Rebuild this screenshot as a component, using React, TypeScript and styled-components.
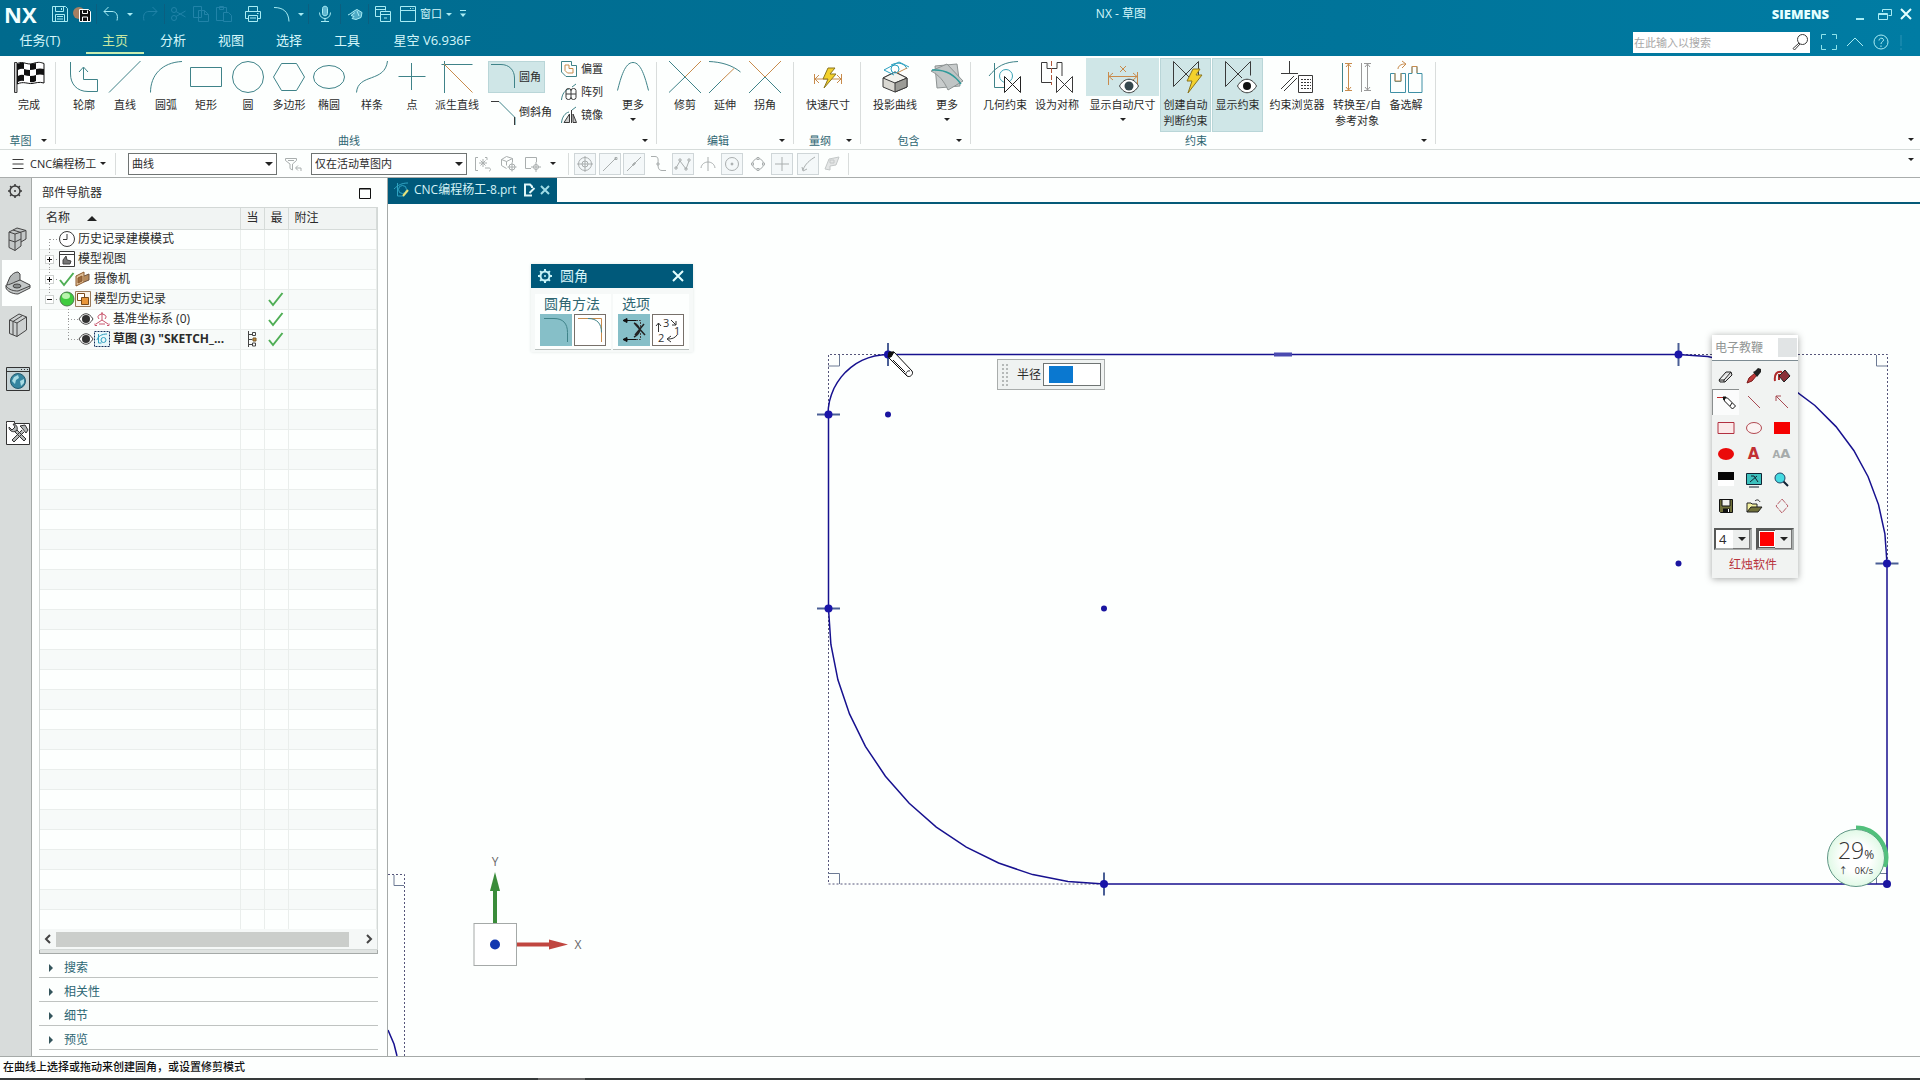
import React from 'react';
import styled, { createGlobalStyle, css } from 'styled-components';

const FONT = '"Open Sans", "Noto Sans CJK SC", sans-serif';
const TEAL = '#3f8389';
const AMBER = '#c88b4c';
const INK = '#3a3a3a';
const GREY = '#a9aeae';
const PALE = '#a8ecf4';
const DIM = '#2183a8';
const NAVY = '#17118f';

const GlobalStyle = createGlobalStyle`
  * { box-sizing: border-box; }
  body { margin: 0; overflow: hidden; background: #fdfffe; color: #2b2b2b; font: 11px/16px ${FONT}; }
  button, input, select { font: inherit; color: inherit; }
  svg { display: block; flex: none; }
`;

const plainButton = css`
  border: 0;
  margin: 0;
  padding: 0;
  background: none;
  cursor: default;
`;

/* ---------- drawings ---------- */

const gearPath = (c: number, from: number, to: number) =>
  Array.from({ length: 8 }, (_, i) => {
    const a = (i * Math.PI) / 4;
    const x = Math.cos(a);
    const y = Math.sin(a);
    return `M${(c + x * from).toFixed(1)} ${(c + y * from).toFixed(1)}L${(c + x * to).toFixed(1)} ${(c + y * to).toFixed(1)}`;
  }).join('');

const art: Record<string, React.ReactNode> = {
  flag: (
    <>
      <path d="M1.500 1.500H4V31.500H1.500Z" fill="#ccc" stroke={INK} />
      <path d="M4.500 2.500C10 -.5 14 4.500 20 2.500S28 1.500 31 2.500V22C26 20.500 23 22 19 22.500S10 20 4.500 23Z" fill="#fff" stroke="#111" />
      <path d="M5 3q3-2 6-1v6q-3-1-6 1zM17 3q4 0 6-1v6q-3 1-6 1zM11 8q3 1 6 1v6q-3 0-6-1zM23 8q4-1 8 0v6q-4-1-8 0zM5 15q3-2 6-1v6q-3-1-6 1zM17 15q4 0 6-1v6q-3 2-6 1z" fill="#111" />
    </>
  ),
  profile: <path d="M2.500 1V13C2.500 23 9 30.500 20 30.500H29.500V18.500H15.500V6.500M11 11l4.500-5 4.500 5" stroke={TEAL} />,
  line: <path d="M0 31.500L31.500 0" stroke={TEAL} />,
  arc: <path d="M.5 31.500C.5 14 12 1.500 32 .5" stroke={TEAL} />,
  rect: <path d="M.5 6.500h31v19h-31z" stroke={TEAL} />,
  circle: <circle cx="16" cy="16" r="15.500" stroke={TEAL} />,
  hexagon: <path d="M8.500 2.500h15l8 13.500-8 13.500h-15L.5 16z" stroke={TEAL} />,
  ellipse: <ellipse cx="16" cy="16" rx="15.500" ry="11.500" stroke={TEAL} />,
  spline: <path d="M.5 31.500C2 12 29 22 31.500 0" stroke={TEAL} />,
  plus: <path d="M2.500 15.500h27M15.500 2v27" stroke={TEAL} />,
  derive: (
    <>
      <path d="M.5 3.500h31M3.500 0v32" stroke={TEAL} />
      <path d="M3 3l28.500 28.500" stroke={AMBER} />
    </>
  ),
  fillet: <path d="M0 3.500H10C18 3.500 23.500 9 23.500 17V27" stroke={TEAL} />,
  chamfer: (
    <>
      <path d="M0 3.500h8l16 16V27" stroke={TEAL} />
      <path d="M0 3.500h8M23.500 19v8" stroke={INK} />
    </>
  ),
  offset: (
    <>
      <path d="M.5.500h10v4h5v11H5L.5 11z" stroke={TEAL} />
      <path d="M4 4h4v3.500h4V12H6.500L4 9.500z" stroke={AMBER} />
    </>
  ),
  pattern: (
    <>
      <path d="M.5 16C1 10 4 6 8 5M11 3l4-3" stroke={TEAL} />
      <path d="M5 6.500a2.500 2 0 1 1 5 0a2.500 2 0 1 1 5 0v7a2.500 2 0 1 1-5 0a2.500 2 0 1 1-5 0zM5 10h10M10 6v8" stroke={INK} />
    </>
  ),
  mirror: (
    <>
      <path d="M.5 16C1 10 4 6 8 5M11 3l4-3" stroke={TEAL} />
      <path d="M3 15.500L8.500 7v8.500zM10.500 3v13M12 7l3.500 8.500H12zM10.500 4v12" fill="#ccc" stroke={INK} />
    </>
  ),
  parabola: <path d="M.5 29.500C4 16 8 1.500 16 1.500S28 16 31.500 29.500" stroke={TEAL} />,
  trim: (
    <>
      <path d="M16 16L32 0" stroke={AMBER} />
      <path d="M0 0l32 32M0 31.500L16 16" stroke={TEAL} />
    </>
  ),
  extend: (
    <>
      <path d="M0 .5C12 1 23 4 31.500 11" stroke={TEAL} />
      <path d="M12 20L25 7.500" stroke={AMBER} />
      <path d="M0 32L12 20" stroke={TEAL} />
    </>
  ),
  corner: (
    <>
      <path d="M0 0l16 16L32 0" stroke={AMBER} />
      <path d="M0 32l16-16 16 16" stroke={TEAL} />
    </>
  ),
  rapid: (
    <>
      <path d="M2.500 13v10M29.500 13v10M3 18h26M7 14l-4 4 4 4M25 14l4 4-4 4" stroke={AMBER} />
      <path d="M16 7l-5 11h5l-4 9 12-14h-6l5-6z" fill="#f3d12c" stroke="#8a7520" />
    </>
  ),
  project: (
    <>
      <path d="M4 17l12-6 12 6v9l-12 5-12-5z" fill="#d9d8d2" stroke={INK} />
      <path d="M4 17l12 5 12-5-12-6z" fill="#f3f3ee" stroke={INK} />
      <path d="M16 22v9l12-5v-9z" fill="#9b9b96" stroke={INK} />
      <path d="M5 9L20 1l10 5M5 9l10 5M12 4c8-4 14-1 16 4" stroke="#2aa0c0" />
      <circle cx="16" cy="8" r="4" stroke="#2aa0c0" />
      <path d="M18 12l10-5" stroke={AMBER} />
    </>
  ),
  surfaces: (
    <>
      <path d="M4 5l22-2 3 22-23 2z" fill="#c8cccc" stroke="#8d9393" />
      <path d="M0 10L16 3l16 17-15 9C13 20 8 14 0 10z" fill="#bfc4c4" fillOpacity=".9" stroke="#8d9393" />
      <path d="M1 9c13-1 22 4 29 14" stroke="#2f9a9a" strokeWidth="1.500" />
    </>
  ),
  geo: (
    <>
      <path d="M5.500 2v24.500h11M0 15C8 5 16 1 29 .5" stroke={TEAL} />
      <circle cx="17" cy="15" r="6.500" stroke="#3aa3b5" />
      <path d="M15.500 15.500v16l16-16v16z" fill="#fff" stroke="#222" />
    </>
  ),
  symm: (
    <>
      <path d="M11 21.500H.5V1.500H6V7.500h10V1.500h5V15" stroke={INK} />
      <path d="M10.500 0v24" stroke="#b0563a" strokeDasharray="5 2" />
      <path d="M15.500 15.500v16l16-16v16z" fill="#fff" stroke={INK} />
    </>
  ),
  autodim: (
    <>
      <path d="M1.500 11v13M30.500 11v13M2 15.500h28M6 12l-4 3.500L6 19M26 12l4 3.500-4 3.500M13 5l6 6M19 5l-6 6" stroke={AMBER} />
      <path d="M12.500 25c5-9 14-9 19 0-5 9-14 9-19 0z" fill="#fff" stroke={INK} />
      <circle cx="22" cy="25" r="4.500" fill="#35474d" />
    </>
  ),
  autoinfer: (
    <>
      <path d="M3.500.500v25l25-25v14M3.500.500L20 17" stroke={INK} />
      <path d="M23 8l-6 12h5l-4 12 14-18h-6l4-6z" fill="#f3d12c" stroke="#8a7520" />
    </>
  ),
  showcon: (
    <>
      <path d="M3.500.500v25l25-25v14M3.500.500L20 17" stroke={INK} />
      <path d="M15.500 25c5-9 14-9 19 0-5 9-14 9-19 0z" fill="#fff" stroke={INK} />
      <circle cx="25" cy="25" r="4" fill="#111" />
    </>
  ),
  browser: (
    <>
      <path d="M8.500 0v12M0 12.500h17M0 28l13-13M3 30l13-13" stroke={INK} />
      <path d="M17.500 14.500h14v17h-14z" fill="#fff" stroke={INK} />
      <path d="M20 18.500h10M20 21.500h10M20 24.500h10M20 27.500h10" stroke={INK} strokeDasharray="2 1" />
    </>
  ),
  convert: (
    <>
      <path d="M4 2.500h7M4 29.500h7M7.500 3v26M5 6l2.500-3L10 6M5 26l2.500 3 2.500-3" stroke={AMBER} />
      <path d="M1.500 2v29" stroke={TEAL} />
      <path d="M20.500 2v29M23 2.500h7M23 29.500h7M26.500 3v26M24 6l2.500-3L29 6M24 26l2.500 3 2.500-3" stroke="#999" />
    </>
  ),
  alt: (
    <>
      <path d="M.5 12.500H5v8h6v-8h4.500v19H.5zM18.500 12.500H22v-7h5v7h5v19H18.500z" stroke="#3f90a5" />
      <path d="M5 12v8h6v-8M8 8c0-3 3-5 7-5M12 0l4 3-4 4M22 12V5.500h5V12" stroke={AMBER} />
    </>
  ),
  save: <path d="M.5.500h13l2 2v13H.5zM3.500.500v5h8v-5M3.500 15.500v-7h9v7M5 10.500h6M5 13h6M9.500 2v2" stroke={PALE} />,
  saveas: (
    <>
      <circle cx="4" cy="7" r="6" fill="#a57f62" />
      <path d="M4.500 3.500h9l2 2v10h-11z" fill="#111" stroke="#fff" />
      <path d="M7.500 4.500v3h5v-3M7.500 15v-4h5v4" stroke="#fff" />
    </>
  ),
  undo: <path d="M5.500 1L1 5.500 5.500 10M1 5.500h8c4 0 6.500 3 5 9" stroke={PALE} />,
  redo: <path d="M10.500 1L15 5.500 10.500 10M15 5.500H7c-4 0-6.500 3-5 9" stroke={DIM} />,
  cut: (
    <g stroke={DIM}>
      <circle cx="4" cy="4" r="2.500" />
      <circle cx="4" cy="12" r="2.500" />
      <path d="M6 5.500L15.500 11M6 10.500L15.500 5" />
    </g>
  ),
  copy: <path d="M.5.500h8v11h-8zM5.500 4.500h6l4 4v7h-10zM11.500 4.500v4h4" stroke={DIM} />,
  paste: <path d="M7.500 14.500h-7v-13h10v5M3.500.500h4v3h-4zM7.500 6.500h5l3 3v6h-8z" stroke={DIM} />,
  print: <path d="M3.500 5V.5h9V5M3.500 12.500h-3v-7h15v7h-3M3.500 9.500h9v6h-9zM5 12h6M12 7.500h1.500" stroke={PALE} />,
  curve: <path d="M0 1.500c9 0 14.500 4 15 14" stroke={PALE} />,
  mic: (
    <g stroke={PALE}>
      <path d="M5.500 2.500c0-3 5-3 5 0v5c0 3-5 3-5 0z" fill="#5fb6cf" />
      <path d="M2.500 6.500c0 8 11 8 11 0M8 12v3.500M4 15.500h8" />
    </g>
  ),
  hand: <path d="M1 9c3-1 5-4 9-5.500l5 3-1 5-5 2-4-1 2-2-3-1 4-3M10 5l2 5" stroke={PALE} fill="#4da9c4" />,
  windows: <path d="M.5.500h10v4M.5.500v10h5M.5 3.500h10M5.500 5.500h10v10h-10zM5.500 8.500h10M9 12h3" stroke={PALE} />,
  window: <path d="M.5.500h15v15H.5zM.5 4.500h15M10 2.500h1M12.500 2.500h1" stroke={PALE} />,
  minimize: <path d="M4 13h8" stroke={PALE} strokeWidth="2" />,
  restore: <path d="M6.500 6V3.500h9v6h-3M2.500 7.500h9v6h-9zM2.500 8.500h9" stroke={PALE} />,
  close: <path d="M3 3l10 10M13 3L3 13" stroke="#e4ffff" strokeWidth="2" />,
  expand: <path d="M.5 5V.5H5M11 .5h4.500V5M15.500 11v4.500H11M5 15.500H.5V11" stroke="#8fe3ea" />,
  chevron: <path d="M0 12l8-8 8 8" stroke={PALE} />,
  help: (
    <>
      <circle cx="8" cy="8" r="7" stroke={PALE} />
      <path d="M6 6.500c0-3 4.500-3 4.500-.5 0 2-2.500 1.500-2.500 4M8 11.500v1.500" stroke={PALE} />
    </>
  ),
  more: <path d="M8 1v11M8 14v2" stroke="#2a93b5" />,
  lens: (
    <>
      <circle cx="10.500" cy="5.500" r="5" stroke={INK} />
      <path d="M7 9l-6 5.500 1.500 1.500L8 10" stroke={INK} />
    </>
  ),
  menu: <path d="M2.500 3.500h11M2.500 8h11M2.500 12.500h11" stroke={INK} />,
  funnel: <path d="M.5 2.500h11v2L7.500 8v6L5 12.500V8L.5 4.500zM3 4.500h6M16 15v-3h-5M13 9.500l-2.500 2.500 2.500 2.500" stroke={GREY} />,
  selA: <path d="M3 1.500H.5v13H3M10 1.500h2V4M8 3v8M4 7h8M5.500 4.500l5 5M10.500 4.500l-5 5M10 12h4c2 0 2 3 0 3" stroke={GREY} />,
  selB: (
    <g stroke={GREY}>
      <path d="M.5 3.500l5-3 6 2v4M.5 3.500v6l5 3M.5 3.500l5 2 6-3M5.500 5.500v4" />
      <circle cx="11" cy="11" r="3" />
      <path d="M11 6.500v9M6.500 11h9" />
    </g>
  ),
  selC: (
    <g stroke={GREY}>
      <path d="M6 12.500H.5v-11h11V6" />
      <circle cx="11" cy="11" r="2.500" />
      <path d="M11 6v10M6 11h10" />
    </g>
  ),
  snap0: (
    <g stroke={GREY}>
      <circle cx="8" cy="8" r="6.500" />
      <circle cx="8" cy="8" r="3" />
      <path d="M8 0v16M0 8h16" />
    </g>
  ),
  snap1: <path d="M1 15L14 2M13 1.500h2v2h-2z" stroke={GREY} />,
  snap2: <path d="M1 15L15 1M6.500 8.500l2-2 1 1-2 2z" stroke={GREY} />,
  snap3: <path d="M0 .5h4c4 0 3 4 3 7s0 7 4 7h4M6 7h2v2H6z" stroke={GREY} />,
  snap4: <path d="M1 12L5 5l6 8 3-8M4 3h2v2H4zM10 12h2v2h-2zM0 11h2v2H0zM13 3h2v2h-2z" stroke={GREY} />,
  snap5: <path d="M8 1v14M1 12c1-8 13-8 14 0" stroke={GREY} />,
  snap6: (
    <g stroke={GREY}>
      <circle cx="8" cy="8" r="6.500" />
      <circle cx="8" cy="8" r="1" fill={GREY} />
    </g>
  ),
  snap7: (
    <g stroke={GREY}>
      <circle cx="8" cy="8" r="5.500" />
      <path d="M7 1.500h2v2H7zM7 12.500h2v2H7zM1.500 7h2v2h-2zM12.500 7h2v2h-2z" fill="#fff" />
    </g>
  ),
  snap8: <path d="M8 1v14M1 8h14" stroke={GREY} />,
  snap9: <path d="M15 1C10 4 5 8 3 14M2 11l1 4 4-2" stroke={GREY} />,
  snap10: <path d="M1 13L5 3l10-2-3 8-6 1v4zM6 4h4v3H6z" stroke="#c4c8c8" fill="#e4e6e6" />,
  gear: (
    <g stroke={INK}>
      <circle cx="8" cy="8" r="5" strokeWidth="1.500" />
      <circle cx="8" cy="8" r="1" fill={INK} stroke="none" />
      <path d={gearPath(8, 5, 7)} strokeWidth="1.500" />
    </g>
  ),
  gearLight: (
    <g stroke="#c8f4f8">
      <circle cx="8" cy="8" r="4.500" strokeWidth="2" />
      <circle cx="8" cy="8" r="1" fill="#c8f4f8" stroke="none" />
      <path d={gearPath(8, 5, 7)} strokeWidth="2" />
    </g>
  ),
  blocks: (
    <g stroke="#444" strokeLinejoin="round">
      <path d="M3 5l8-4 9 2.500V12l-5 3v4l-6 4.500-6-3z" fill="#c3c7c7" />
      <path d="M3 5l6 2v16.500M9 7l11-3.500M3 13l6 2 6-3M15 5.500V15M7 3l8 2.500" />
    </g>
  ),
  partnav: (
    <g stroke="#444" strokeLinejoin="round">
      <path d="M1 13L4 6C6 3 9 1 12 1l2 2v9C10 12 6 14 4 18z" fill="#b3b7b7" />
      <path d="M0 14c3 0 7-2 9-3l5-2 10 5v3l-12 6C6 23 1 20 0 17z" fill="#c4c8c8" />
      <path d="M0 15c3 4 8 5 12 5l12-5" />
      <ellipse cx="11" cy="15" rx="4" ry="2" fill="#8a8e8e" />
    </g>
  ),
  books: (
    <g stroke="#444" strokeLinejoin="round">
      <path d="M3.500 7L13 1l7.500 3v13L11 23.500l-7.500-3z" fill="#cdd1d1" />
      <path d="M3.500 7l7.500 3 9.500-6M11 10v13.500M7 8.500v13.500M7 8.500l9.500-6" />
    </g>
  ),
  globe: (
    <>
      <path d="M.5.500h23v23H.5zM.5 4.500h23" fill="#c7d3d6" stroke="#333" />
      <path d="M15 2.500h7" stroke="#333" strokeDasharray="1 2" />
      <circle cx="12" cy="14" r="7.500" fill="#3585a0" stroke="#245c70" />
      <path d="M8 10l4-2 1 3-3 2-1 4-3-3zM14 14l4-2 0 4-3 3z" fill="#a8dbe4" />
    </>
  ),
  tools: (
    <>
      <path d="M.5 2.500V.5h8v2h15v21H.5z" fill="#fff" stroke="#333" />
      <path d="M8 10l10 10 2-2L10 8M16 9L6 19l2 2L18 11" stroke="#333" fill="#b0b4b4" />
      <path d="M3 6l3 3 3-3-2-3c3 0 5 3 4 6-2 3-8 2-8-3zM14 5l5-1 3 5-2 3-4-5z" stroke="#333" fill="#b0b4b4" />
    </>
  ),
  clock: (
    <g stroke={INK}>
      <circle cx="8" cy="8" r="7.500" fill="#fff" />
      <path d="M8 3v5.500H4" />
    </g>
  ),
  modelview: (
    <>
      <path d="M.5.500h15v15H.5zM.5 3.500h15" stroke={INK} fill="#fff" />
      <path d="M4 9l3-4 1 4 4 1-1 3H4z" fill="#777" stroke="#444" />
    </>
  ),
  check: <path d="M1 9l4 5L14.500 2" stroke="#4fae55" strokeWidth="2" />,
  camera: (
    <>
      <path d="M1 5l8-4v10l-8 4z" fill="#e0bf98" stroke="#8c5a2c" />
      <path d="M3 7l4-2v5l-4 2z" fill="#9a6a40" stroke="#8c5a2c" />
      <path d="M9 5l5-2v6l-5 2" fill="#b58a5c" stroke="#6d5240" />
    </>
  ),
  ball: (
    <>
      <circle cx="8" cy="8" r="7" fill="#3ecb3e" stroke="#4c7a4c" />
      <ellipse cx="7" cy="5" rx="4" ry="3" fill="#b9f5ae" />
    </>
  ),
  history: (
    <>
      <path d="M.5.500h15v15H.5z" stroke="#9a7a5a" fill="#faf3e8" />
      <path d="M2.500 2.500h7v7h-7z" fill="#fff" stroke="#7a4a1a" />
      <path d="M6.500 6.500h7v7h-7z" fill="#e8963a" stroke="#7a4a1a" />
    </>
  ),
  eye: (
    <>
      <path d="M1 8c4-7 10-7 14 0-4 7-10 7-14 0z" fill="#fff" stroke="#444" />
      <circle cx="8" cy="8" r="4" fill="#333" />
    </>
  ),
  csys: <path d="M8 2v7l-6 4M8 9l6 4M8 1v2M1 12.500v2h2M15 12.500v2h-2M5 8a4 3 0 1 1 6 0M5 13h6" stroke="#c8546c" />,
  sketch: (
    <>
      <path d="M.5.500h15v15H.5z" stroke="#14305c" strokeDasharray="2 1" fill="#e9f8fb" />
      <path d="M4.500 3v9h3M3 9c1-4 5-6 10-6" stroke="#2e9fbf" />
      <circle cx="9.500" cy="9" r="2.500" stroke="#2e9fbf" />
    </>
  ),
  nodes: (
    <>
      <path d="M1.500 0v16M1.500 3.500h4M1.500 8.500h4M1.500 13.500h4M5.500 1.500h3v3h-3zM5.500 12h3v3h-3z" stroke="#444" />
      <path d="M6 7h3v3H6z" fill="#c08a3a" stroke="#7a5a2a" />
    </>
  ),
  maximize: <path d="M2.500 3.500h11v10h-11zM2.500 4h11" stroke="#111" />,
  left: <path d="M10 4L6 8l4 4" stroke="#444" strokeWidth="2" />,
  right: <path d="M6 4l4 4-4 4" stroke="#444" strokeWidth="2" />,
  tabSketch: (
    <>
      <path d="M3.500 1v13h6M0 7C4 3 8 1 14 1" stroke="#2fa3c2" />
      <circle cx="8.500" cy="7.500" r="4" stroke="#2fa3c2" />
      <path d="M14 8l-5 6" stroke="#e8e27a" strokeWidth="2" />
    </>
  ),
  tabDoc: (
    <>
      <path d="M11 13.500H4v-11h5l2 2V6" stroke="#dff6f8" strokeWidth="2" />
      <path d="M13.500 6l-5 5" stroke="#dff6f8" strokeWidth="2" />
    </>
  ),
  tabX: <path d="M4 4l8 8M12 4l-8 8" stroke="#9fdce6" strokeWidth="2" />,
  dlgFillet: <path d="M4 4.500h10c9 0 13.500 5 13.500 14V28" stroke={TEAL} />,
  dlgFillet2: (
    <>
      <path d="M4 4.500h23.500V28" stroke={AMBER} />
      <path d="M14 4.500c9 0 13.500 5 13.500 14" stroke={TEAL} />
    </>
  ),
  dlgDelete: (
    <>
      <path d="M5 6.500h13M5 25.500h13" stroke="#111" />
      <path d="M5 6.500l4-2v4zM5 25.500l4-2v4z" fill="#111" stroke="#111" />
      <path d="M18 6.500h4.500V14M22.500 19v6.500H18" stroke="#444" strokeDasharray="2 1" />
      <path d="M16 9c4 2 5 4 6 7-1 3-2 5-6 7M17 10l10 11M26 10l-9 11" stroke="#222" strokeWidth="1.500" />
    </>
  ),
  eraser: <path d="M1 12l7-8h5l1 3-7 7H2zM1 12h5l7-8M6 12v2" stroke="#222" fill="#e0e0e0" />,
  dropper: (
    <>
      <path d="M1 15l2-5 6-5 2 2-5 6z" fill="#c23b3b" stroke="#7a1a1a" />
      <path d="M7 4l2-1 3-3 3 1 0 3-4 5z" fill="#222" />
    </>
  ),
  bucket: (
    <>
      <path d="M1 13C0 6 3 3 8 4M5 12V6" stroke="#b02a2a" strokeWidth="2" />
      <path d="M5 8l6-6 5 6-6 6z" fill="#8a3038" stroke="#222" />
    </>
  ),
  pen: (
    <>
      <path d="M-1 3.500h6" stroke="#c02a2a" />
      <path d="M5.500 3.500l4 .5 8 8-3 3-8-8z" fill="#fff" stroke="#111" />
      <path d="M5 3h3L6 6zM12 12l2-3" fill="#111" stroke="#111" />
    </>
  ),
  pLine: <path d="M2 2l12 12" stroke="#a84a52" />,
  pArrow: <path d="M14 14L2 2M2 7V2h5" stroke="#a84a52" />,
  pRect: <path d="M0 2.500h16v11H0z" stroke="#b23040" fill="#fbe9e9" />,
  pOval: <ellipse cx="8" cy="8" rx="7.500" ry="5.500" stroke="#b24a52" fill="#fbf3f3" />,
  pRectF: <path d="M0 2h16v12H0z" fill="#f50000" />,
  pOvalF: <ellipse cx="8" cy="8" rx="8" ry="6" fill="#ea0a0a" />,
  boards: (
    <>
      <path d="M0 0h16v8H0z" fill="#050505" />
      <path d="M0 8h16v6H0z" fill="#fff" />
    </>
  ),
  monitor: (
    <>
      <path d="M.5 1.500h15v11H.5z" fill="#3cc0bd" stroke="#123" />
      <path d="M4 10l7-6M5 4h3l4 6M3 15h10" stroke="#123" />
    </>
  ),
  zoomIn: (
    <>
      <path d="M9 9l5 5" stroke="#123" strokeWidth="2" />
      <circle cx="6" cy="6" r="5" fill="#45dbe2" stroke="#246" />
    </>
  ),
  floppy: (
    <>
      <path d="M1.500 1.500h13v13h-12l-1-1z" fill="#70703a" stroke="#111" />
      <path d="M4 1.500h8V8H4z" fill="#f2f2ee" stroke="#111" />
      <path d="M5 10.500h7v4H5z" fill="#111" />
      <path d="M10 11h1v3h-1z" fill="#fff" />
    </>
  ),
  folder: (
    <>
      <path d="M1 14V5h4l1 1h5v3" fill="#f2f0a0" stroke="#222" />
      <path d="M1 14l4-5h11l-4 5z" fill="#70703a" stroke="#222" />
      <path d="M9 3c2-2 4-1 5 1" stroke="#222" />
    </>
  ),
  diamond: <path d="M8 1l6 7-6 7-6-7z" stroke="#b8606a" strokeDasharray="5 1" />,
};

function Icon({ name, size = 16, w, h }: { name: string; size?: number; w?: number; h?: number }) {
  return (
    <svg width={w ?? size} height={h ?? size} viewBox={`0 0 ${w ?? size} ${h ?? size}`} fill="none" overflow="visible" aria-hidden="true">
      {art[name]}
    </svg>
  );
}

const Caret = styled.i<{ $color?: string }>`
  display: inline-block;
  flex: none;
  border: 3px solid transparent;
  border-top-color: ${(p) => p.$color ?? '#222'};
  border-bottom-width: 0;
`;

/* ---------- frame ---------- */

const Shell = styled.div`
  display: flex;
  flex-direction: column;
  height: 100vh;
`;

const Banner = styled.header`
  background: linear-gradient(90deg, #006a8d, #00749a 70%, #007ca3);
  color: #d5f7fb;
`;

const BannerRow = styled.div<{ $left: number; $right: number }>`
  display: flex;
  align-items: center;
  height: 28px;
  padding: 0 ${(p) => p.$right}px 0 ${(p) => p.$left}px;
`;

const Brand = styled.strong`
  width: 46px;
  font: 700 22px/28px ${FONT};
  color: #f2ffff;
`;

const ToolButton = styled.button<{ $w: number; $edge?: boolean }>`
  ${plainButton}
  display: flex;
  align-items: center;
  justify-content: center;
  gap: 4px;
  width: ${(p) => p.$w}px;
  height: 20px;
  border-left: ${(p) => (p.$edge ? '1px solid #0b5f80' : '0')};
`;

const AppTitle = styled.h1`
  flex: 1;
  margin: 0;
  text-align: center;
  font: 400 12px/20px ${FONT};
`;

const Maker = styled.span`
  margin-right: 19px;
  font: 800 13px/20px ${FONT};
  color: #e4ffff;
`;

const Tab = styled.button<{ $w: number; $on?: boolean }>`
  ${plainButton}
  width: ${(p) => p.$w}px;
  height: 28px;
  padding-bottom: 4px;
  font-size: 13px;
  line-height: 20px;
  color: ${(p) => (p.$on ? '#c6e6a2' : '#d5f7fb')};
  background: ${(p) => (p.$on ? 'linear-gradient(#c9ecb0, #c9ecb0) 0 24px / 100% 2px no-repeat' : 'none')};
`;

const Search = styled.label`
  display: flex;
  align-items: center;
  width: 177px;
  height: 21px;
  margin: 0 6px 0 auto;
  padding-right: 2px;
  background: #fff;
  input {
    flex: 1;
    min-width: 0;
    height: 20px;
    padding: 0 1px;
    border: 0;
    outline: 0;
    background: none;
  }
  input::placeholder { color: #a8a8a8; }
`;

/* ---------- ribbon ---------- */

const Ribbon = styled.div`
  display: flex;
  align-items: stretch;
  height: 94px;
  border-bottom: 1px solid #d6dcda;
`;

const Group = styled.section<{ $w: number; $pad: number }>`
  display: flex;
  flex-direction: column;
  position: relative;
  flex: 0 0 ${(p) => p.$w}px;
  padding-top: 2px;
  > div { padding-left: ${(p) => p.$pad}px; }
  &::after {
    content: '';
    position: absolute;
    right: 0;
    top: 6px;
    bottom: 5px;
    border-right: 1px solid #d9dddc;
  }
`;

const GroupBody = styled.div`
  display: flex;
  height: 74px;
`;

const GroupFoot = styled.footer`
  display: flex;
  align-items: center;
  height: 17px;
  padding-right: 9px;
  text-align: center;
  color: #2f6672;
  span { flex: 1; }
`;

const BigButton = styled.button<{ $w: number; $on?: boolean; $half?: boolean; $gap?: number }>`
  ${plainButton}
  display: flex;
  flex-direction: column;
  align-items: center;
  width: ${(p) => p.$w}px;
  height: 74px;
  margin-left: ${(p) => p.$gap ?? 0}px;
  padding-top: 3px;
  white-space: pre;
  background: ${(p) => (p.$on ? '#cfe6e7' : p.$half ? 'linear-gradient(#cfe6e7, #cfe6e7) 0 0 / 100% 38px no-repeat' : 'none')};
  box-shadow: ${(p) => (p.$on ? 'inset 0 0 0 1px #b9d6d8' : 'none')};
  span { margin-top: 4px; }
  i { margin-top: 5px; }
`;

const Stack = styled.div<{ $w: number; $gap: number }>`
  display: flex;
  flex-direction: column;
  width: ${(p) => p.$w}px;
  margin-left: ${(p) => p.$gap}px;
  padding-top: 3px;
`;

const SideButton = styled.button<{ $h: number; $tall?: boolean; $on?: boolean }>`
  ${plainButton}
  display: flex;
  align-items: center;
  gap: 4px;
  height: ${(p) => p.$h}px;
  padding-left: ${(p) => (p.$tall ? 3 : 0)}px;
  white-space: nowrap;
  background: ${(p) => (p.$on ? '#cfe6e7' : 'none')};
  box-shadow: ${(p) => (p.$on ? 'inset 0 0 0 1px #b9d6d8' : 'none')};
`;

type Big = { icon: string; label: string; w: number; on?: boolean; half?: boolean; gap?: number; more?: boolean };

const drawing: Big[] = [
  { icon: 'profile', label: '轮廓', w: 40 },
  { icon: 'line', label: '直线', w: 42 },
  { icon: 'arc', label: '圆弧', w: 40 },
  { icon: 'rect', label: '矩形', w: 40 },
  { icon: 'circle', label: '圆', w: 44 },
  { icon: 'hexagon', label: '多边形', w: 38 },
  { icon: 'ellipse', label: '椭圆', w: 42 },
  { icon: 'spline', label: '样条', w: 44 },
  { icon: 'plus', label: '点', w: 36 },
  { icon: 'derive', label: '派生直线', w: 54 },
];

const constraints: Big[] = [
  { icon: 'geo', label: '几何约束', w: 52 },
  { icon: 'symm', label: '设为对称', w: 52 },
  { icon: 'autodim', label: '显示自动尺寸', w: 73, half: true, gap: 3, more: true },
  { icon: 'autoinfer', label: '创建自动\n判断约束', w: 51, on: true, gap: 1 },
  { icon: 'showcon', label: '显示约束', w: 51, on: true, gap: 1 },
  { icon: 'browser', label: '约束浏览器', w: 60, gap: 4 },
  { icon: 'convert', label: '转换至/自\n参考对象', w: 56, gap: 2 },
  { icon: 'alt', label: '备选解', w: 40, gap: 1 },
];

const bigs = (list: Big[]) =>
  list.map((b) => (
    <BigButton key={b.label} $w={b.w} $on={b.on} $half={b.half} $gap={b.gap}>
      <Icon name={b.icon} size={32} />
      <span>{b.label}</span>
      {b.more && <Caret />}
    </BigButton>
  ));

function RibbonGroup({ title, w, pad = 8, children }: { title: string; w: number; pad?: number; children: React.ReactNode }) {
  return (
    <Group $w={w} $pad={pad}>
      <GroupBody>{children}</GroupBody>
      <GroupFoot>
        <span>{title}</span>
        <Caret />
      </GroupFoot>
    </Group>
  );
}

const EndCaret = styled.div`
  display: flex;
  align-items: flex-end;
  margin-left: auto;
  padding: 0 6px 8px 0;
`;

/* ---------- selection bar ---------- */

const SelectionBar = styled.div`
  display: flex;
  align-items: center;
  height: 28px;
  padding-left: 10px;
  border-bottom: 1px solid #a9adac;
`;

const MenuButton = styled.button`
  ${plainButton}
  display: flex;
  align-items: center;
  gap: 4px;
  width: 106px;
  height: 22px;
  border-right: 1px solid #d9dddc;
`;

const Picker = styled.div<{ $w: number; $gap: number }>`
  position: relative;
  width: ${(p) => p.$w}px;
  margin-left: ${(p) => p.$gap}px;
  select {
    appearance: none;
    display: block;
    width: 100%;
    height: 22px;
    padding: 0 3px;
    border: 1px solid #6f7473;
    border-radius: 0;
    background: #fff;
  }
  i {
    position: absolute;
    right: 4px;
    top: 9px;
    border-width: 4px;
    border-bottom-width: 0;
  }
`;

const SnapButton = styled.button<{ $box?: boolean; $gap: number }>`
  ${plainButton}
  display: grid;
  place-items: center;
  width: 22px;
  height: 22px;
  margin-left: ${(p) => p.$gap}px;
  border: ${(p) => (p.$box ? '1px solid #cfd6d8' : '0')};
  background: ${(p) => (p.$box ? '#f4f8f9' : 'none')};
`;

const Rule = styled.span<{ $gap: number }>`
  height: 22px;
  margin-left: ${(p) => p.$gap}px;
  border-right: 1px solid #d9dddc;
`;

/* ---------- resource bar and navigator ---------- */

const Body = styled.main`
  display: flex;
  flex: 1;
  min-height: 0;
`;

const ResourceBar = styled.nav`
  display: flex;
  flex-direction: column;
  width: 32px;
  border-right: 1px solid #a5aaa8;
  background: #d8dcdb;
`;

const ResourceButton = styled.button<{ $h: number; $gap?: number; $on?: boolean }>`
  ${plainButton}
  display: grid;
  place-items: center;
  height: ${(p) => p.$h}px;
  margin: ${(p) => p.$gap ?? 0}px ${(p) => (p.$on ? -1 : 0)}px 0 ${(p) => (p.$on ? 2 : 0)}px;
  padding-left: ${(p) => (p.$on ? 2 : p.$h > 30 ? 5 : 0)}px;
  padding-right: ${(p) => (p.$h < 30 ? 2 : 0)}px;
  background: ${(p) => (p.$on ? '#fdfffe' : 'none')};
`;

const Navigator = styled.aside`
  display: flex;
  flex-direction: column;
  width: 356px;
  padding: 0 9px 6px 7px;
  border-right: 1px solid #a5aaa8;
`;

const NavTitle = styled.div`
  display: flex;
  align-items: center;
  justify-content: space-between;
  height: 29px;
  padding: 1px 5px 0 3px;
  font-size: 12px;
  button { ${plainButton} }
`;

const TreeFrame = styled.div`
  display: flex;
  flex-direction: column;
  flex: 1;
  min-height: 0;
  border: 1px solid #d3d8d6;
  overflow: hidden;
`;

const TreeClip = styled.div`
  flex: 1;
  min-height: 0;
  overflow: hidden;
`;

const Tree = styled.table`
  width: 100%;
  table-layout: fixed;
  border-collapse: collapse;
  font-size: 12px;
  th, td {
    height: 20px;
    padding: 0;
    border-right: 1px solid #eaeeec;
    border-bottom: 1px solid #eaeeec;
    text-align: left;
    font-weight: 400;
    line-height: 18px;
  }
  th {
    height: 21px;
    padding-left: 6px;
    background: #f1f4f3;
    border-color: #d6dbd9;
  }
  tr:nth-child(even) td { background: #f7faf9; }
`;

const NameCell = styled.div<{ $bold?: boolean }>`
  display: flex;
  align-items: center;
  height: 19px;
  white-space: nowrap;
  font-weight: ${(p) => (p.$bold ? 700 : 400)};
  svg + span { margin-left: 3px; }
`;

const MarkCell = styled.div`
  display: grid;
  place-items: center;
`;

const SortMark = styled.i`
  display: inline-block;
  margin-left: 17px;
  border: 5px solid transparent;
  border-top-width: 0;
  border-bottom-color: #222;
  vertical-align: 1px;
`;

function Branch({ kind, first, last }: { kind: 'leaf' | 'plus' | 'minus' | 'sub'; first?: boolean; last?: boolean }) {
  const dots = { stroke: '#999', strokeDasharray: '1 2' };
  if (kind === 'sub') {
    return (
      <svg width="38" height="20" fill="none">
        <path d={last ? 'M28.500 0V10M28 10.500h10' : 'M28.500 0V20M28 10.500h10'} {...dots} />
      </svg>
    );
  }
  return (
    <svg width="19" height="20" fill="none">
      <path d={`M9.500 ${first ? 10 : 0}V${last ? 10 : 20}M10 10.500h9`} {...dots} />
      {kind !== 'leaf' && (
        <>
          <rect x="5.500" y="6.500" width="8" height="8" fill="#fff" stroke="#cfd3d1" />
          <path d={kind === 'plus' ? 'M7 10.500h5M9.500 8v5' : 'M7 10.500h5'} stroke="#111" />
        </>
      )}
    </svg>
  );
}

type Row = { branch: React.ReactNode; icons: string[]; name: string; bold?: boolean; node?: boolean; ok?: boolean };

const rows: Row[] = [
  { branch: <Branch kind="leaf" first />, icons: ['clock'], name: '历史记录建模模式' },
  { branch: <Branch kind="plus" />, icons: ['modelview'], name: '模型视图' },
  { branch: <Branch kind="plus" />, icons: ['check', 'camera'], name: '摄像机' },
  { branch: <Branch kind="minus" last />, icons: ['ball', 'history'], name: '模型历史记录', ok: true },
  { branch: <Branch kind="sub" />, icons: ['eye', 'csys'], name: '基准坐标系 (0)', ok: true },
  { branch: <Branch kind="sub" last />, icons: ['eye', 'sketch'], name: '草图 (3) "SKETCH_...', bold: true, node: true, ok: true },
];

const ScrollTrack = styled.div`
  display: flex;
  align-items: center;
  height: 20px;
  background: #f5f8f7;
  button { ${plainButton} }
`;

const Thumb = styled.div`
  flex: 1;
  height: 15px;
  margin-right: 12px;
  background: #cbcecb;
`;

const Splitter = styled.div`
  height: 4px;
  border: solid #a5aaa8;
  border-width: 0 1px 1px;
  background: #dfe3e1;
`;

const Fold = styled.button`
  ${plainButton}
  display: flex;
  align-items: center;
  gap: 11px;
  height: 24px;
  padding: 4px 10px 0;
  border-bottom: 1px solid #bfc3c1;
  font-size: 12px;
  color: #2c6673;
  i {
    border: 4px solid transparent;
    border-left-color: #34555c;
    border-right-width: 0;
  }
`;

/* ---------- graphics window ---------- */

const Work = styled.section`
  display: flex;
  flex-direction: column;
  flex: 1;
  min-width: 0;
`;

const FileTabs = styled.div`
  display: flex;
  height: 26px;
  border-bottom: 2px solid #055a78;
`;

const FileTab = styled.div`
  display: flex;
  align-items: center;
  height: 26px;
  padding: 0 4px 2px 6px;
  background: #00597a;
  color: #d5f3f7;
  font-size: 12px;
  span { margin: 0 4px; }
  button { ${plainButton} }
`;

const Canvas = styled.div`
  position: relative;
  flex: 1;
  overflow: hidden;
`;

const Drawing = styled.svg`
  position: absolute;
  width: 100%;
  height: 100%;
`;

const Floating = styled.div<{ $x: number; $y: number; $w: number }>`
  position: absolute;
  left: ${(p) => p.$x}px;
  top: ${(p) => p.$y}px;
  width: ${(p) => p.$w}px;
`;

const Dialog = styled(Floating)`
  background: #f6f9f8;
  box-shadow: 0 0 3px #dfe6e5;
`;

const DialogHead = styled.div`
  display: flex;
  align-items: center;
  height: 24px;
  padding: 0 7px 0 6px;
  background: #00597a;
  color: #d5f3f7;
  font-size: 14px;
  span { flex: 1; margin-left: 7px; }
  button { ${plainButton} }
`;

const DialogBody = styled.div`
  display: flex;
  gap: 2px;
  padding: 6px 4px 2px;
`;

const Options = styled.fieldset`
  flex: 1 0 auto;
  margin: 0;
  padding: 0 4px 3px 5px;
  border: 0;
  border-bottom: 1px solid #b9c0be;
  background: #fdfffe;
  legend {
    float: left;
    width: 100%;
    padding: 0 4px;
    color: #2f6672;
    font-size: 14px;
    line-height: 20px;
  }
  div { display: flex; gap: 2px; clear: both; }
`;

const OptionButton = styled.button<{ $on?: boolean }>`
  ${plainButton}
  width: 32px;
  height: 32px;
  background: ${(p) => (p.$on ? '#86bfc8' : '#fff')};
  box-shadow: ${(p) => (p.$on ? 'none' : 'inset 0 0 0 1px #77706a')};
`;

const RadiusBox = styled(Floating)`
  display: flex;
  align-items: center;
  height: 31px;
  padding: 0 3px;
  border: 1px solid #a9adac;
  background: #eff2f1;
  font-size: 12px;
  label { margin-left: 9px; }
`;

const Grip = styled.span`
  width: 7px;
  height: 23px;
  background: radial-gradient(circle, #b5b9b8 1px, transparent 1px) 0 0 / 4px 4px;
`;

const RadiusField = styled.span`
  position: relative;
  flex: 1;
  margin-left: 2px;
  input {
    display: block;
    width: 100%;
    height: 23px;
    border: 1px solid #6f7473;
    background: #fff;
  }
  &::after {
    content: '';
    position: absolute;
    left: 6px;
    top: 3px;
    width: 24px;
    height: 17px;
    background: #0a78d0;
  }
`;

const Palette = styled(Floating)`
  display: flex;
  flex-direction: column;
  padding-bottom: 4px;
  background: #f1f3f2;
  box-shadow: 0 1px 7px rgba(0, 0, 0, 0.35);
`;

const PaletteHead = styled.div`
  display: flex;
  align-items: center;
  justify-content: space-between;
  height: 26px;
  padding: 0 1px 0 3px;
  border-bottom: 1px solid #7d8b92;
  background: #fff;
  color: #929695;
  font-size: 12px;
  button { ${plainButton} width: 19px; height: 19px; background: #e1e4e5; }
`;

const PaletteGrid = styled.div`
  display: grid;
  grid-template-columns: 27px 29px 27px;
  grid-auto-rows: 26px;
  padding-top: 2px;
`;

const PaletteTool = styled.button<{ $on?: boolean }>`
  ${plainButton}
  display: grid;
  place-items: center;
  font: 700 15px/20px "DejaVu Sans", sans-serif;
  background: ${(p) => (p.$on ? '#fbfcfc' : 'none')};
  box-shadow: ${(p) => (p.$on ? 'inset 1px 1px 0 #8a8e8e' : 'none')};
`;

const Letters = styled.span<{ $size: number; $color: string }>`
  font-size: ${(p) => p.$size}px;
  color: ${(p) => p.$color};
`;

const PaletteRow = styled.div`
  display: flex;
  justify-content: space-between;
  padding: 9px 4px 0 2px;
`;

const MiniSelect = styled.div<{ $swatch?: boolean }>`
  position: relative;
  width: 38px;
  select {
    appearance: none;
    display: block;
    width: 100%;
    height: 22px;
    padding: 0 3px;
    border: 2px inset #a9adac;
    border-radius: 0;
    background: ${(p) =>
      p.$swatch
        ? 'linear-gradient(#f00, #f00) 2px 2px / 14px 14px no-repeat, linear-gradient(#fff, #fff) 1px 1px / 16px 16px no-repeat #555'
        : '#fff'};
    font-size: 13px;
  }
  &::after {
    content: '';
    position: absolute;
    right: 2px;
    top: 2px;
    width: 16px;
    height: 18px;
    border-right: 1px solid #777;
    border-bottom: 1px solid #777;
    background: #eceeed;
  }
  i { position: absolute; z-index: 1; right: 6px; top: 9px; border-width: 4px; border-bottom-width: 0; }
`;

const PaletteNote = styled.div`
  margin-top: 6px;
  padding-right: 4px;
  text-align: center;
  color: #b8323c;
  font-size: 12px;
  line-height: 18px;
`;

const Meter = styled(Floating)`
  display: flex;
  flex-direction: column;
  align-items: center;
  height: 58px;
  padding-top: 8px;
  border: 1px solid #5f9585;
  border-radius: 50%;
  background: radial-gradient(circle, #fff 35%, #c9f5d3);
  color: #333;
  font-size: 12px;
  line-height: 14px;
  svg { position: absolute; left: -5px; top: -5px; }
  b { font: 300 23px/24px ${FONT}; }
  small { margin-top: 3px; font-size: 9px; line-height: 12px; white-space: pre; }
`;

/* Arcs are drawn as chords, the way the display tessellates them. */
const chords = (cx: number, cy: number, r: number, from: number, steps: number) =>
  Array.from({ length: steps + 1 }, (_, i) => {
    const a = ((from + (90 * i) / steps) * Math.PI) / 180;
    return `${(cx + r * Math.cos(a)).toFixed(1)},${(cy + r * Math.sin(a)).toFixed(1)}`;
  }).join(' ');

const ticks: [number, number, boolean][] = [
  [888, 354.5, false],
  [828.5, 414.5, true],
  [828.5, 608.5, true],
  [1104, 884, false],
  [1678.5, 354.5, false],
  [1887, 563.5, true],
];

function SketchView() {
  return (
    <Drawing aria-label="草图">
      <g transform="translate(-388 -204)" fill="none">
        <g stroke="#55557a" strokeDasharray="2 2">
          <path d="M888 354.500H828.500V414M828.500 608V884H1104M1678 354.500H1887.500V563" />
          <path d="M388 874.500H404.500V1056" />
        </g>
        <g stroke="#6c7a94">
          <path d="M839.500 355V366H828M1876.500 355V366H1887M839.500 884V873.500H828M1876.500 884V873.500H1887M394 875V885.500H404" />
        </g>
        <g stroke={NAVY} strokeWidth="1.500">
          <path d="M888 354.500H1678.500M1887 563.500V884H1104M828.500 608.500V414.500" />
          <polyline points={chords(888, 414.5, 60, 180, 14)} />
          <polyline points={chords(1678, 563.5, 209, 270, 11)} />
          <polyline points={chords(1104, 608.5, 275.5, 90, 12)} />
          <path d="M388 1030L394 1044L397 1056" />
          <path d="M1274 354.500H1292" strokeWidth="4" stroke="#4a4ab0" />
        </g>
        {ticks.map(([x, y, flat]) => (
          <g key={`${x}-${y}`}>
            <path d={flat ? `M${x - 11.5} ${y}h23` : `M${x} ${y - 11.5}v23`} stroke="#4a5f96" strokeWidth="2" />
            <circle cx={x} cy={y} r="4" fill="#1a15a8" />
          </g>
        ))}
        <g fill="#1a15a0">
          <circle cx="1887" cy="884" r="4" />
          <circle cx="888" cy="414.500" r="3" />
          <circle cx="1104" cy="608.500" r="3" />
          <circle cx="1678.500" cy="563.500" r="3" />
        </g>
        <path d="M890 353l4-1 18 19c2 3-2 7-5 5l-18-18z" fill="#fff" stroke="#111" />
        <path d="M888 357l1-5 5 0-3 5z" fill="#111" stroke="#111" />
        <path d="M893 360l12 12M906 375c-1-2 2-5 4-4" stroke="#111" />
        <rect x="474" y="923.500" width="42.500" height="42" fill="#fff" stroke="#a5a9a8" />
        <circle cx="495" cy="944.500" r="5" fill="#1238b0" />
        <path d="M493 923V890h4v33z" fill="#3a8c3a" />
        <path d="M490 891l5-19 5 19z" fill="#3a8c3a" />
        <path d="M517 942.500h32v4h-32z" fill="#c04640" />
        <path d="M549 939.500l19 5-19 5z" fill="#c04640" />
        <g fill="#666" fontSize="12" textAnchor="middle" fontFamily={FONT}>
          <text x="495" y="866">Y</text>
          <text x="578" y="949">X</text>
        </g>
      </g>
    </Drawing>
  );
}

const palette: [string, string][] = [
  ['eraser', '橡皮'], ['dropper', '取色'], ['bucket', '填充'],
  ['pen', '画笔'], ['pLine', '直线'], ['pArrow', '箭头'],
  ['pRect', '矩形'], ['pOval', '椭圆'], ['pRectF', '实心矩形'],
  ['pOvalF', '实心椭圆'], ['A', '文字'], ['AA', '字体'],
  ['boards', '黑板'], ['monitor', '屏幕'], ['zoomIn', '放大'],
  ['floppy', '保存'], ['folder', '打开'], ['diamond', '收起'],
];

function paletteArt(name: string) {
  if (name === 'A') return <Letters $size={15} $color="#c22f33">A</Letters>;
  if (name === 'AA') {
    return (
      <span>
        <Letters $size={10} $color="#a6abab">A</Letters>
        <Letters $size={13} $color="#a6abab">A</Letters>
      </span>
    );
  }
  return <Icon name={name} />;
}

const StatusBar = styled.footer`
  height: 22px;
  padding: 0 3px;
  border-top: 1px solid #a5aaa8;
  color: #111;
  font-size: 11px;
  line-height: 20px;
  font-weight: 500;
`;

const Desk = styled.div`
  height: 2px;
  background: linear-gradient(#6a6a6a, #6a6a6a) 538px 0 / 47px 2px no-repeat #363a3a;
`;

const tabs: [string, number][] = [
  ['任务(T)', 82], ['主页', 58], ['分析', 58], ['视图', 58], ['选择', 58], ['工具', 58], ['星空 V6.936F', 112],
];

const TabStrip = styled.div`
  display: flex;
  button:first-child { padding-right: 10px; }
`;

const snaps: [string, boolean, number][] = [
  ['snap0', true, 5], ['snap1', true, 3], ['snap2', true, 2], ['snap3', false, 3], ['snap4', true, 2],
  ['snap5', false, 3], ['snap6', true, 2], ['snap7', false, 4], ['snap8', true, 2], ['snap9', true, 4], ['snap10', false, 2],
];

export default function App() {
  return (
    <Shell>
      <GlobalStyle />
      <Banner>
        <BannerRow $left={4} $right={4}>
          <Brand>NX</Brand>
          <ToolButton $w={20} aria-label="保存"><Icon name="save" /></ToolButton>
          <ToolButton $w={26} aria-label="另存为"><Icon name="saveas" /></ToolButton>
          <ToolButton $w={28} $edge aria-label="撤销"><Icon name="undo" /></ToolButton>
          <ToolButton $w={12} aria-label="撤销列表"><Caret $color={PALE} /></ToolButton>
          <ToolButton $w={28} aria-label="重做"><Icon name="redo" /></ToolButton>
          <ToolButton $w={26} $edge aria-label="剪切"><Icon name="cut" /></ToolButton>
          <ToolButton $w={22} aria-label="复制"><Icon name="copy" /></ToolButton>
          <ToolButton $w={24} aria-label="粘贴"><Icon name="paste" /></ToolButton>
          <ToolButton $w={34} aria-label="打印"><Icon name="print" /></ToolButton>
          <ToolButton $w={24} aria-label="曲线"><Icon name="curve" /></ToolButton>
          <ToolButton $w={14} aria-label="曲线列表"><Caret $color={PALE} /></ToolButton>
          <ToolButton $w={32} $edge aria-label="语音"><Icon name="mic" /></ToolButton>
          <ToolButton $w={28} $edge aria-label="触控"><Icon name="hand" /></ToolButton>
          <ToolButton $w={28} $edge aria-label="层叠窗口"><Icon name="windows" /></ToolButton>
          <ToolButton $w={60}><Icon name="window" />窗口<Caret $color={PALE} /></ToolButton>
          <ToolButton $w={14} aria-label="自定义"><svg width="8" height="8"><path d="M1 .5h6" stroke={PALE} /><path d="M1 3.500h6L4 7z" fill={PALE} /></svg></ToolButton>
          <AppTitle>NX - 草图</AppTitle>
          <Maker>SIEMENS</Maker>
          <ToolButton $w={24} aria-label="最小化"><Icon name="minimize" /></ToolButton>
          <ToolButton $w={24} aria-label="还原"><Icon name="restore" /></ToolButton>
          <ToolButton $w={20} aria-label="关闭"><Icon name="close" /></ToolButton>
        </BannerRow>
        <BannerRow $left={4} $right={12}>
          <TabStrip>
            {tabs.map(([t, w], i) => (
              <Tab key={t} $w={w} $on={i === 1}>{t}</Tab>
            ))}
          </TabStrip>
          <Search>
            <input placeholder="在此输入以搜索" aria-label="搜索" />
            <Icon name="lens" />
          </Search>
          <ToolButton $w={26} aria-label="全屏"><Icon name="expand" /></ToolButton>
          <ToolButton $w={26} aria-label="折叠"><Icon name="chevron" /></ToolButton>
          <ToolButton $w={26} aria-label="帮助"><Icon name="help" /></ToolButton>
          <ToolButton $w={14} aria-label="更多选项"><Icon name="more" /></ToolButton>
        </BannerRow>
      </Banner>

      <Ribbon>
        <RibbonGroup title="草图" w={56} pad={7}>
          {bigs([{ icon: 'flag', label: '完成', w: 44 }])}
        </RibbonGroup>
        <RibbonGroup title="曲线" w={601}>
          {bigs(drawing)}
          <Stack $w={57} $gap={4}>
            <SideButton $h={32} $tall $on><Icon name="fillet" w={24} h={32} />圆角</SideButton>
            <SideButton $h={38} $tall><Icon name="chamfer" w={24} h={28} />倒斜角</SideButton>
          </Stack>
          <Stack $w={44} $gap={16}>
            <SideButton $h={16}><Icon name="offset" />偏置</SideButton>
            <SideButton $h={30}><Icon name="pattern" />阵列</SideButton>
            <SideButton $h={16}><Icon name="mirror" />镜像</SideButton>
          </Stack>
          {bigs([{ icon: 'parabola', label: '更多', w: 40, gap: 8, more: true }])}
        </RibbonGroup>
        <RibbonGroup title="编辑" w={137}>
          {bigs([
            { icon: 'trim', label: '修剪', w: 40 },
            { icon: 'extend', label: '延伸', w: 40 },
            { icon: 'corner', label: '拐角', w: 40 },
          ])}
        </RibbonGroup>
        <RibbonGroup title="量纲" w={67}>
          {bigs([{ icon: 'rapid', label: '快速尺寸', w: 52 }])}
        </RibbonGroup>
        <RibbonGroup title="包含" w={110}>
          {bigs([
            { icon: 'project', label: '投影曲线', w: 52 },
            { icon: 'surfaces', label: '更多', w: 40, gap: 6, more: true },
          ])}
        </RibbonGroup>
        <RibbonGroup title="约束" w={465}>{bigs(constraints)}</RibbonGroup>
        <EndCaret><Caret /></EndCaret>
      </Ribbon>

      <SelectionBar>
        <MenuButton><Icon name="menu" />CNC编程杨工<Caret /></MenuButton>
        <Picker $w={149} $gap={12}>
          <select aria-label="类型过滤器"><option>曲线</option></select>
          <Caret />
        </Picker>
        <SnapButton $gap={5} aria-label="过滤器"><Icon name="funnel" /></SnapButton>
        <Picker $w={156} $gap={7}>
          <select aria-label="选择范围"><option>仅在活动草图内</option></select>
          <Caret />
        </Picker>
        <SnapButton $gap={5} aria-label="选择组"><Icon name="selA" /></SnapButton>
        <SnapButton $gap={4} aria-label="选择体"><Icon name="selB" /></SnapButton>
        <SnapButton $gap={2} aria-label="框选"><Icon name="selC" /></SnapButton>
        <SnapButton $gap={-2} aria-label="框选列表"><Caret /></SnapButton>
        <Rule $gap={4} />
        {snaps.map(([n, box, gap], i) => (
          <SnapButton key={n} $box={box} $gap={gap} aria-label={`捕捉 ${i + 1}`}><Icon name={n} /></SnapButton>
        ))}
        <Rule $gap={5} />
        <EndCaret><Caret /></EndCaret>
      </SelectionBar>

      <Body>
        <ResourceBar>
          <ResourceButton $h={26} aria-label="设置"><Icon name="gear" /></ResourceButton>
          <ResourceButton $h={38} $gap={16} aria-label="装配导航器"><Icon name="blocks" size={24} /></ResourceButton>
          <ResourceButton $h={46} $gap={2} $on aria-label="部件导航器"><Icon name="partnav" size={24} /></ResourceButton>
          <ResourceButton $h={38} aria-label="重用库"><Icon name="books" size={24} /></ResourceButton>
          <ResourceButton $h={38} $gap={16} aria-label="浏览器"><Icon name="globe" size={24} /></ResourceButton>
          <ResourceButton $h={38} $gap={16} aria-label="工具箱"><Icon name="tools" size={24} /></ResourceButton>
        </ResourceBar>

        <Navigator>
          <NavTitle>
            部件导航器
            <button aria-label="最大化"><Icon name="maximize" /></button>
          </NavTitle>
          <TreeFrame>
            <TreeClip>
              <Tree>
                <colgroup>
                  <col width="200" />
                  <col width="24" />
                  <col width="24" />
                  <col />
                </colgroup>
                <thead>
                  <tr>
                    <th>名称<SortMark /></th>
                    <th>当</th>
                    <th>最</th>
                    <th>附注</th>
                  </tr>
                </thead>
                <tbody>
                  {rows.map((r) => (
                    <tr key={r.name}>
                      <td>
                        <NameCell $bold={r.bold}>
                          {r.branch}
                          {r.icons.map((n) => <Icon key={n} name={n} />)}
                          <span>{r.name}</span>
                        </NameCell>
                      </td>
                      <td>{r.node && <MarkCell><Icon name="nodes" w={10} h={16} /></MarkCell>}</td>
                      <td>{r.ok && <MarkCell><Icon name="check" /></MarkCell>}</td>
                      <td />
                    </tr>
                  ))}
                  {Array.from({ length: 30 }, (_, i) => (
                    <tr key={i}><td /><td /><td /><td /></tr>
                  ))}
                </tbody>
              </Tree>
            </TreeClip>
            <ScrollTrack>
              <button aria-label="向左"><Icon name="left" /></button>
              <Thumb />
              <button aria-label="向右"><Icon name="right" /></button>
            </ScrollTrack>
          </TreeFrame>
          <Splitter />
          {['搜索', '相关性', '细节', '预览'].map((t) => (
            <Fold key={t}><i />{t}</Fold>
          ))}
        </Navigator>

        <Work>
          <FileTabs>
            <FileTab>
              <Icon name="tabSketch" />
              <span>CNC编程杨工-8.prt</span>
              <Icon name="tabDoc" />
              <button aria-label="关闭文件"><Icon name="tabX" /></button>
            </FileTab>
          </FileTabs>
          <Canvas>
            <SketchView />

            <Dialog $x={143} $y={60} $w={162}>
              <DialogHead>
                <Icon name="gearLight" />
                <span>圆角</span>
                <button aria-label="关闭"><Icon name="close" /></button>
              </DialogHead>
              <DialogBody>
                <Options>
                  <legend>圆角方法</legend>
                  <div>
                    <OptionButton $on aria-label="修剪"><Icon name="dlgFillet" size={32} /></OptionButton>
                    <OptionButton aria-label="取消修剪"><Icon name="dlgFillet2" size={32} /></OptionButton>
                  </div>
                </Options>
                <Options>
                  <legend>选项</legend>
                  <div>
                    <OptionButton $on aria-label="删除第三条曲线"><Icon name="dlgDelete" size={32} /></OptionButton>
                    <OptionButton aria-label="创建备选圆角">
                      <svg width="32" height="32" fill="none" stroke="#333">
                        <path d="M6.500 18V9M4 12l2.500-3L9 12M19 6l5 5M24 7v4h-4M25 21c-2 3-5 4-9 4M19 22l-4 3 4 3" />
                        <g fill="#333" stroke="none" fontSize="11" fontFamily={FONT}>
                          <text x="11" y="13">3</text>
                          <text x="22" y="21">1</text>
                          <text x="6" y="28">2</text>
                        </g>
                      </svg>
                    </OptionButton>
                  </div>
                </Options>
              </DialogBody>
            </Dialog>

            <RadiusBox $x={609} $y={155} $w={108}>
              <Grip />
              <label htmlFor="radius">半径</label>
              <RadiusField><input id="radius" /></RadiusField>
            </RadiusBox>

            <Palette $x={1324} $y={131} $w={86}>
              <PaletteHead>电子教鞭<button aria-label="关闭工具条" /></PaletteHead>
              <PaletteGrid>
                {palette.map(([n, label]) => (
                  <PaletteTool key={n} $on={n === 'pen'} aria-label={label}>{paletteArt(n)}</PaletteTool>
                ))}
              </PaletteGrid>
              <PaletteRow>
                <MiniSelect>
                  <select aria-label="线宽"><option>4</option></select>
                  <Caret />
                </MiniSelect>
                <MiniSelect $swatch>
                  <select aria-label="颜色"><option aria-label="红色" /></select>
                  <Caret />
                </MiniSelect>
              </PaletteRow>
              <PaletteNote>红烛软件</PaletteNote>
            </Palette>

            <Meter $x={1439} $y={625} $w={58}>
              <svg width="66" height="66" fill="none">
                <path d="M33 2.500A30.500 30.500 0 0 1 62 42" stroke="#52c07c" strokeWidth="4" />
              </svg>
              <span><b>29</b>%</span>
              <small>↑   0K/s</small>
            </Meter>
          </Canvas>
        </Work>
      </Body>

      <StatusBar>在曲线上选择或拖动来创建圆角，或设置修剪模式</StatusBar>
      <Desk />
    </Shell>
  );
}
